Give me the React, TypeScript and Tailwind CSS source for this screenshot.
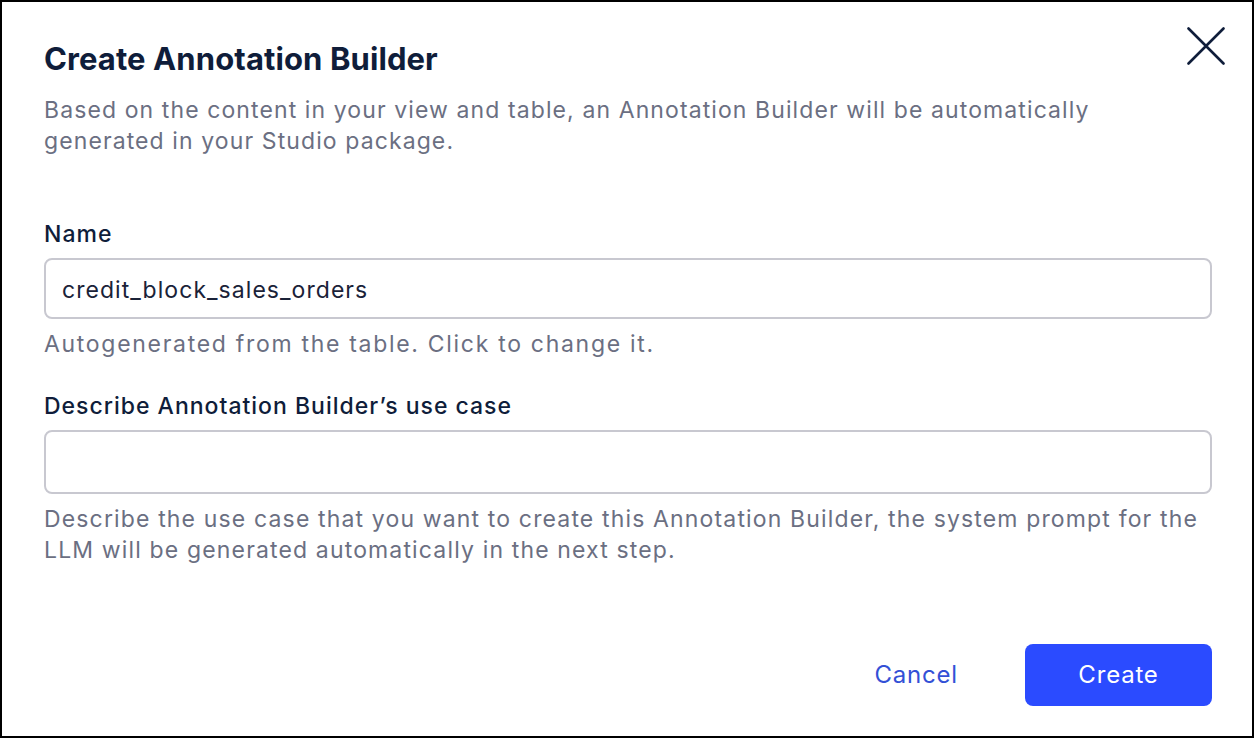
export default function App() {
  return (
    <div className="relative flex h-[738px] w-[1254px] flex-col border-2 border-black bg-white pl-[42px] pr-[40px] pb-[30px] pt-[39px] font-['Inter',sans-serif]">
      <button className="absolute right-[27px] top-[25px] text-[#0f1d3a]" aria-label="Close">
        <svg width="38" height="38" viewBox="0 0 38 38" fill="none" stroke="currentColor" strokeWidth="2.6" strokeLinecap="round">
          <path d="M1.5 1.5 36.5 36.5M36.5 1.5 1.5 36.5" />
        </svg>
      </button>

      <h1 className="text-[31px] font-bold leading-[36px] tracking-[0.1px] text-[#0f1d3a]">Create Annotation Builder</h1>
      <p className="mt-[18px] text-[23px] leading-[31px] tracking-[1.1px] text-[#6b6f82]">
        Based on the content in your view and table, an Annotation Builder will be automatically
        <br />
        generated in your Studio package.
      </p>

      <label className="mt-[62px] text-[23px] font-medium leading-[30px] tracking-[1.05px] text-[#0f1d3a]">Name</label>
      <div className="mt-[9px] flex h-[61px] items-center rounded-[8px] border-2 border-[#c8c8d0] px-[16px] pt-[3px] text-[23px] tracking-[1.05px] text-[#1a2238]">
        credit_block_sales_orders
      </div>
      <p className="mt-[10px] text-[23px] leading-[30px] tracking-[1.7px] text-[#6b6f82]">Autogenerated from the table. Click to change it.</p>

      <label className="mt-[32px] text-[23px] font-medium leading-[30px] tracking-[1px] text-[#0f1d3a]">Describe Annotation Builder’s use case</label>
      <div className="mt-[9px] h-[64px] rounded-[8px] border-2 border-[#c8c8d0]" />
      <p className="mt-[10px] text-[23px] leading-[31px] tracking-[1.15px] text-[#6b6f82]">
        Describe the use case that you want to create this Annotation Builder, the system prompt for the
        <br />
        LLM will be generated automatically in the next step.
      </p>

      <div className="mt-auto flex items-center justify-end">
        <button className="mr-[67px] text-[24px] tracking-[0.8px] text-[#3350d6]">Cancel</button>
        <button className="h-[62px] w-[187px] rounded-[8px] bg-[#2b4bff] text-[24px] tracking-[0.8px] text-white">Create</button>
      </div>
    </div>
  );
}
